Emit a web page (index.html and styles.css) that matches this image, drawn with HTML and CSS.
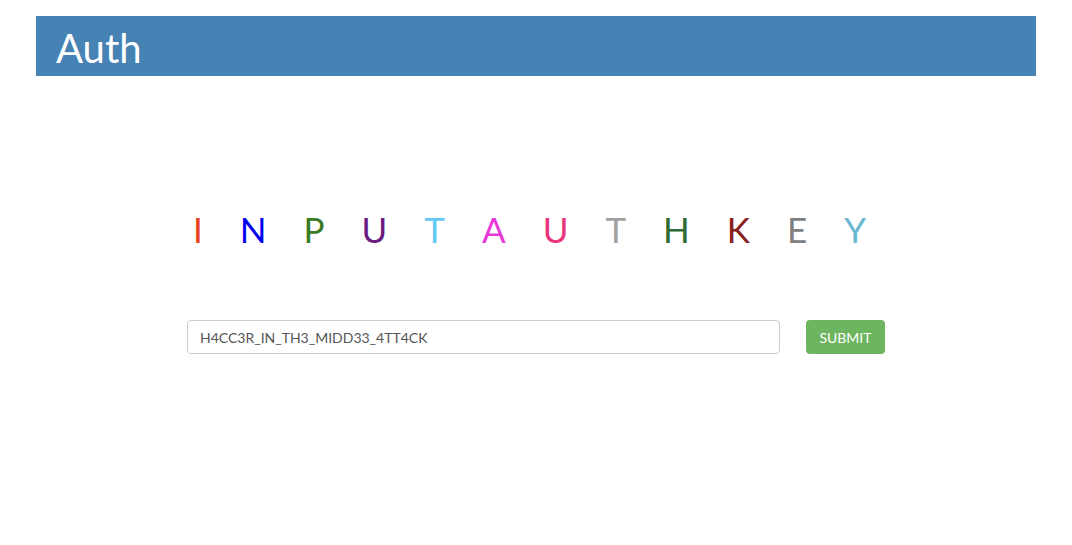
FILE: index.html
```html
<!DOCTYPE html>
<html lang="en">
<head>
  <meta charset="UTF-8">
  <title>Auth</title>
  <link rel="stylesheet" href="styles.css">
</head>
<body>

<div class="page">
  <!-- header bar -->
  <div class="header">
    <h1>Auth</h1>
  </div>

  <!-- colourful title -->
  <div class="title">
    <span class="c1">I</span><span class="c2">N</span><span class="c3">P</span><span class="c4">U</span><span class="c5">T</span><span class="c6">A</span><span class="c7">U</span><span class="c8">T</span><span class="c9">H</span><span class="c10">K</span><span class="c11">E</span><span class="c12">Y</span>
  </div>

  <!-- key form -->
  <form class="auth-form" onsubmit="return false;">
    <input class="key-input" type="text" value="H4CC3R_IN_TH3_MIDD33_4TT4CK">
    <button class="submit-btn" type="submit">SUBMIT</button>
  </form>
</div>

</body>
</html>
```

FILE: styles.css
```css
body {
  margin: 0;
  background: #fff;
  font-family: Lato, "Open Sans", sans-serif;
}

.page {
  width: 1000px;
  margin: 16px auto 0;
}

.header {
  background: #4682b4;
  height: 60px;
  padding: 0 20px;
  display: flex;
  align-items: center;
}

.header h1 {
  margin: 4px 0 0;
  color: #fff;
  font-family: Lato, sans-serif;
  font-weight: 400;
  font-size: 40px;
}

.title {
  margin-top: 133px;
  display: flex;
  justify-content: center;
  gap: 37px;
  font-size: 35px;
  font-weight: 400;
  line-height: 40px;
  padding-right: 13px;
}

.c1 { color: #e8401c; }
.c2 { color: #0000f0; }
.c3 { color: #3a7a24; }
.c4 { color: #6a1a80; }
.c5 { color: #62c8f4; }
.c6 { color: #e83ad8; }
.c7 { color: #e8347a; }
.c8 { color: #a0a0a0; }
.c9 { color: #2e6a34; }
.c10 { color: #8a2020; }
.c11 { color: #808080; }
.c12 { color: #6ab8d0; }

.auth-form {
  margin-top: 71px;
  display: flex;
  justify-content: center;
  gap: 26px;
}

.key-input {
  width: 593px;
  height: 34px;
  box-sizing: border-box;
  border: 1px solid #ccc;
  border-radius: 4px;
  padding: 0 12px;
  font-family: Lato, sans-serif;
  font-size: 14px;
  color: #555;
}

.submit-btn {
  width: 79px;
  height: 34px;
  border: none;
  border-radius: 4px;
  background: #6db55f;
  color: #fff;
  font-family: Lato, sans-serif;
  font-size: 14px;
  padding: 0;
}
```
